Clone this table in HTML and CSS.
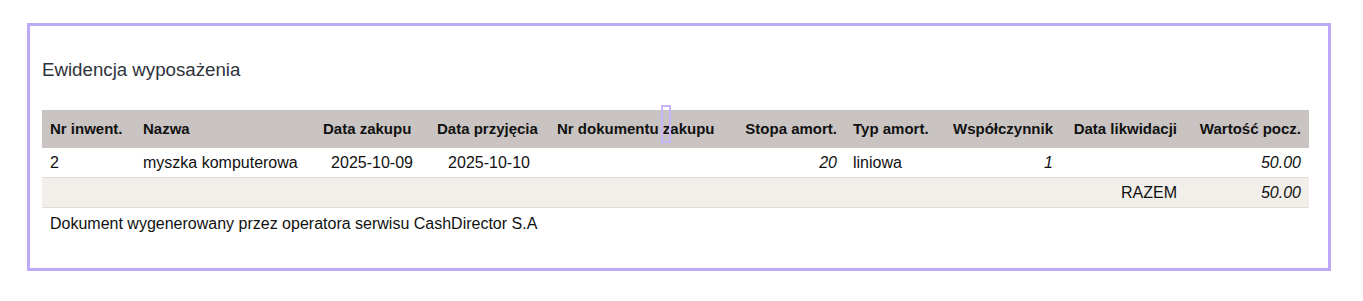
FILE: index.html
```html
<!DOCTYPE html>
<html lang="pl">
<head>
  <meta charset="UTF-8" />
  <meta name="viewport" content="width=device-width, initial-scale=1.0" />
  <title>Ewidencja wyposażenia</title>
  <link rel="stylesheet" href="styles.css">
</head>
<body>
  <div class="raport">
    <h2 class="tytul">Ewidencja wyposażenia</h2>
    <table class="tabela">
      <colgroup>
        <col style="width: 93px">
        <col style="width: 180px">
        <col style="width: 114px">
        <col style="width: 120px">
        <col style="width: 181px">
        <col style="width: 115px">
        <col style="width: 100px">
        <col style="width: 116px">
        <col style="width: 124px">
        <col style="width: 124px">
      </colgroup>
      <thead>
        <tr>
          <th>Nr inwent.</th>
          <th>Nazwa</th>
          <th class="srodek">Data zakupu</th>
          <th class="srodek">Data przyjęcia</th>
          <th>Nr dokumentu zakupu</th>
          <th class="prawo">Stopa amort.</th>
          <th>Typ amort.</th>
          <th class="prawo">Współczynnik</th>
          <th class="prawo">Data likwidacji</th>
          <th class="prawo">Wartość pocz.</th>
        </tr>
      </thead>
      <tbody>
        <tr>
          <td>2</td>
          <td>myszka komputerowa</td>
          <td class="srodek">2025-10-09</td>
          <td class="srodek">2025-10-10</td>
          <td></td>
          <td class="prawo liczba">20</td>
          <td>liniowa</td>
          <td class="prawo liczba">1</td>
          <td></td>
          <td class="prawo liczba">50.00</td>
        </tr>
        <tr class="razem">
          <td colspan="8"></td>
          <td class="prawo">RAZEM</td>
          <td class="prawo liczba">50.00</td>
        </tr>
      </tbody>
    </table>
    <p class="stopka">Dokument wygenerowany przez operatora serwisu CashDirector S.A</p>
    <span class="kursor"></span>
  </div>
</body>
</html>
```

FILE: styles.css
```css
body {
  margin: 23px 32px 0 27px;
  background: #fff;
  font-family: "Liberation Sans", Arial, sans-serif;
  color: #111;
}
.raport {
  position: relative;
  height: 242px;
  border: 3px solid #bcaaf8;
  padding: 0 19px 0 12px;
}
.tytul {
  margin: 33px 0 29px;
  font-size: 18.7px;
  line-height: 22px;
  font-weight: normal;
  color: #2e333a;
}
.tabela {
  width: 1267px;
  table-layout: fixed;
  border-collapse: collapse;
  font-size: 16px;
}
.tabela th {
  background: #c9c4c1;
  padding: 10px 8px;
  line-height: 18px;
  font-size: 15px;
  text-align: left;
  font-weight: bold;
  white-space: nowrap;
}
.tabela td {
  padding: 5px 8px;
  line-height: 19px;
  border-bottom: 1px solid #e0dcd8;
  white-space: nowrap;
}
.tabela .razem td {
  background: #f2efeb;
  height: 17px;
}
.srodek {
  text-align: center;
}
.tabela .prawo {
  text-align: right;
}
.liczba {
  font-style: italic;
}
.stopka {
  margin: 0;
  padding: 6px 8px;
  font-size: 16px;
  line-height: 19px;
}
.kursor {
  position: absolute;
  left: 631px;
  top: 79px;
  width: 6px;
  height: 34px;
  border: 2px solid #c4b5fd;
}
```
